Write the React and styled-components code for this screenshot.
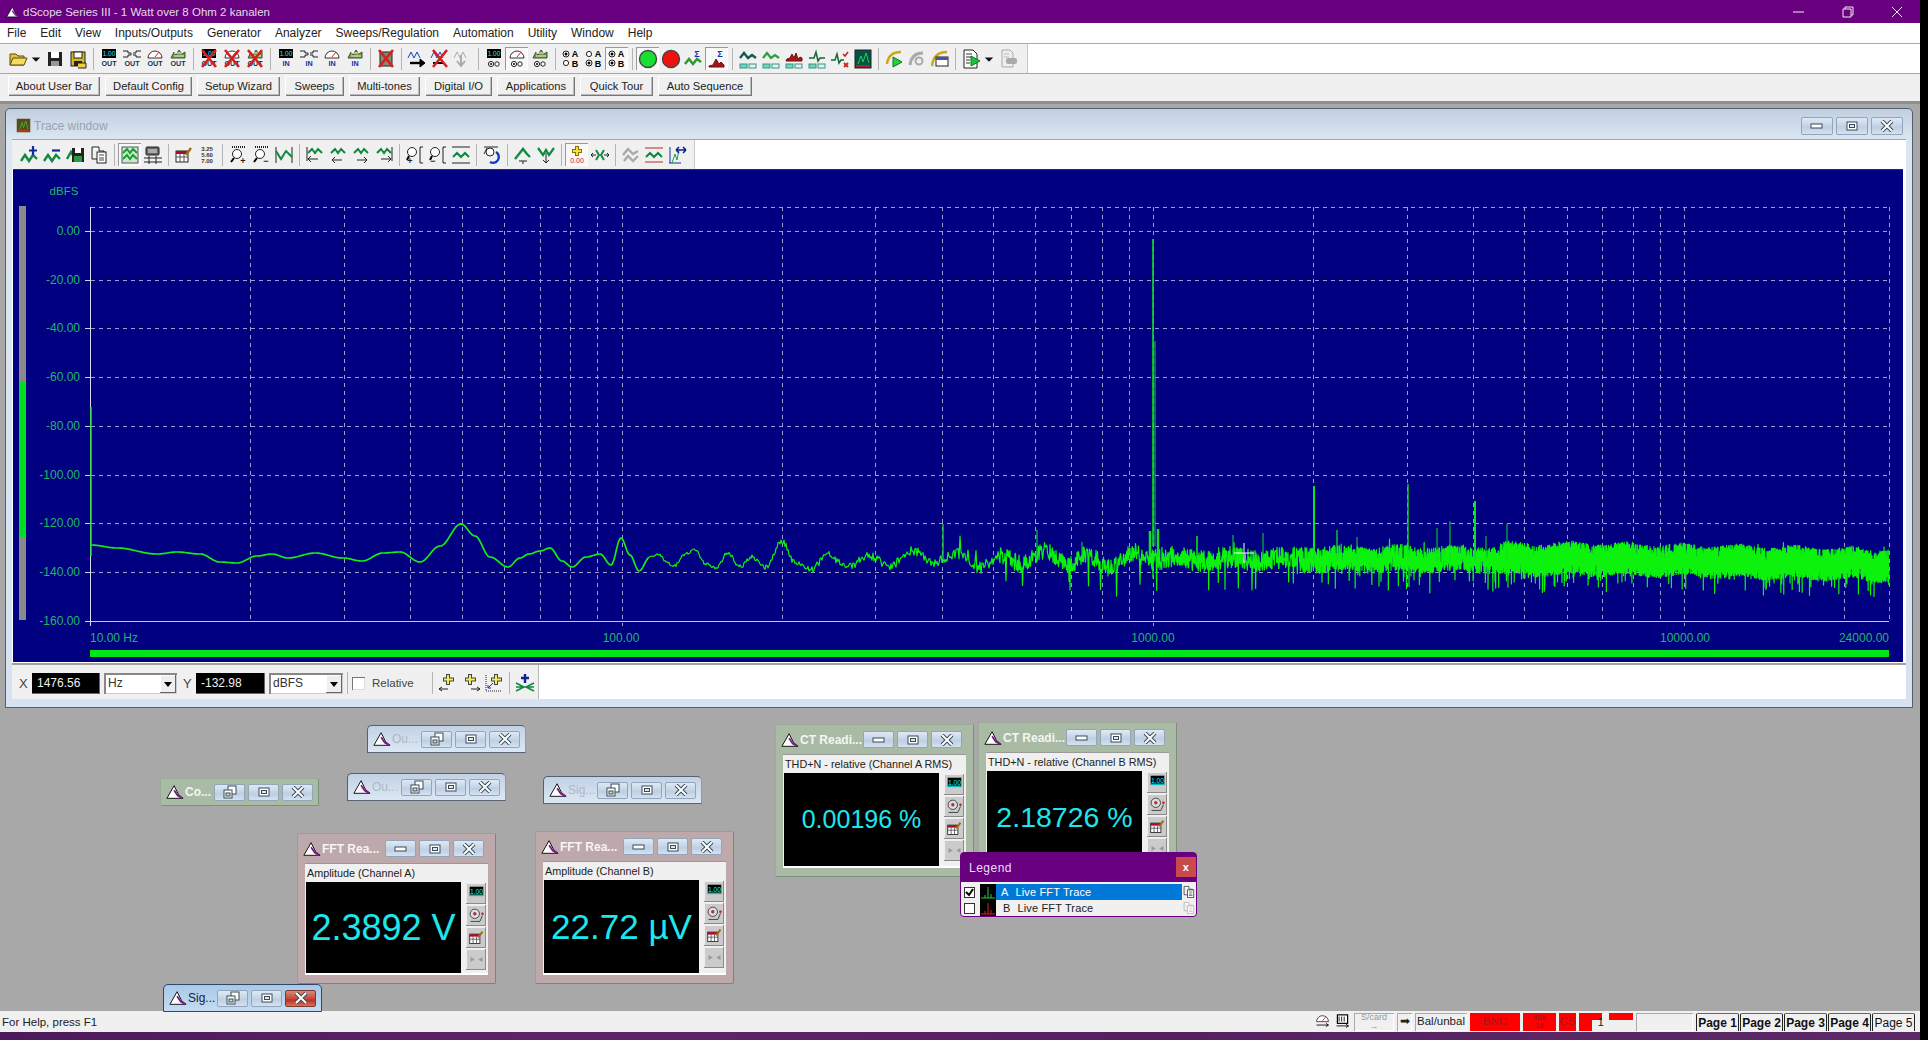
import React from 'react';
import styled, { createGlobalStyle, css } from 'styled-components';

const Global = createGlobalStyle`
  html, body { margin: 0; padding: 0; background: #000; overflow: hidden; }
  #root { width: 1928px; height: 1040px; }
  * { box-sizing: border-box; }
`;
const FONT = '"Liberation Sans", Arial, sans-serif';
const PURPLE = '#680080';

const Screen = styled.div`display:flex;width:1928px;height:1040px;background:#000;font-family:${FONT};font-size:12px;color:#111;`;
const Main = styled.div`display:flex;flex-direction:column;width:1920px;height:1040px;`;
const TitleBar = styled.div`display:flex;align-items:center;height:23px;background:${PURPLE};color:#e4dbe8;padding-left:6px;gap:3px;font-size:11.5px;`;
const TitleText = styled.span`flex:1;`;
const CaptionBtn = styled.div`width:46px;height:23px;display:flex;align-items:center;justify-content:center;`;
const MenuBar = styled.div`display:flex;align-items:center;gap:14px;background:#fff;padding-left:7px;border-bottom:1px solid #a9a9a9;height:21px;`;
const MenuItem = styled.span`font-size:12px;color:#222;`;
const ToolRow = styled.div`display:flex;height:30px;background:#fff;border-bottom:1px solid #a9a9a9;`;
const ToolStrip = styled.div`display:flex;align-items:center;background:#f0f0f0;height:100%;padding:0 ${p=>p.$end}px 0 ${p=>p.$start}px;border-right:1px solid #c8c8c8;`;
const ToolBtn = styled.div`
  width:${p=>p.$w||23}px;height:23px;display:flex;align-items:center;justify-content:center;flex:none;
  ${p=>p.$on&&css`background:#f8f8f8;box-shadow:inset 1px 1px 0 #999,inset -1px -1px 0 #fff;`}
`;
const ToolSep = styled.div`width:8px;height:22px;flex:none;display:flex;justify-content:center;&::after{content:"";width:1px;height:100%;background:#b4b4b4;}`;
const UserBar = styled.div`display:flex;align-items:center;height:27px;background:#f0f0f0;padding:0 0 3px 8px;gap:5px;`;
const UserBtn = styled.div`
  width:${p=>p.$w}px;height:20px;display:flex;align-items:center;justify-content:center;font-size:11.2px;color:#222;background:#f0f0f0;
  box-shadow:inset 1px 1px 0 #fff,inset -1px -1px 0 #777,inset -2px -2px 0 #bbb;
`;
const Mdi = styled.div`position:relative;flex:1;background:#a8a8a8;box-shadow:inset 0 3px 0 #8f8f8f;`;

const TraceWin = styled.div`
  position:absolute;left:5px;top:7px;width:1908px;height:600px;border:1px solid #55606c;border-radius:5px 5px 0 0;
  padding:0 6px 8px;background:linear-gradient(#c0cfe0 0,#dbe6f2 30px,#d6e2ef 100%);display:flex;flex-direction:column;
`;
const TraceHead = styled.div`display:flex;align-items:center;height:30px;padding:3px 3px 0 4px;gap:3px;`;
const TraceTitle = styled.span`flex:1;color:#97a3b0;font-size:12px;`;
const WinBtns = styled.div`display:flex;gap:${p=>p.$gap||3}px;`;
const WinBtn = styled.div`
  width:${p=>p.$w||31}px;height:${p=>p.$h||18}px;display:flex;align-items:center;justify-content:center;border-radius:2px;
  border:1px solid ${p=>p.$red?'#7a3a30':'#93a5ba'};
  background:${p=>p.$red?'linear-gradient(#d88a7a,#c84a38 50%,#b83020 60%,#d87060)':'linear-gradient(#dfe9f4,#c4d4e6 50%,#bccee2 55%,#d4e2f0)'};
`;
const TraceBody = styled.div`flex:1;display:flex;flex-direction:column;background:#fff;`;
const TraceTools = styled.div`display:flex;height:30px;background:#fff;border-top:1px solid #9aa;`;
const PlotWrap = styled.div`height:493px;margin:0 3px 0 1px;background:#000080;border-top:1px solid #333;`;
const PlotSvg = styled.svg`display:block;width:100%;height:100%;`;
const CursorBar = styled.div`display:flex;flex:1;background:#fff;border-top:2px solid #a0a0a0;margin-top:1px;`;
const CursorStrip = styled.div`display:flex;align-items:center;width:527px;background:#f0f0f0;border-right:1px solid #b8b8b8;padding:2px 0 0 7px;font-size:12px;color:#333;`;
const CursorLabel = styled.span`width:13px;margin-left:${p=>p.$ml||0}px;color:#444;font-size:13px;`;
const BlackBox = styled.div`width:${p=>p.$w}px;height:21px;background:#000;color:#f0f0f0;display:flex;align-items:center;padding-left:5px;font-size:12px;box-shadow:inset -1px -1px 0 #666;`;
const Select = styled.div`
  width:${p=>p.$w}px;height:21px;margin:0 ${p=>p.$mr||0}px 0 ${p=>p.$ml||4}px;background:#fff;display:flex;align-items:center;justify-content:space-between;padding-left:4px;
  box-shadow:inset 2px 2px 0 #888,inset -1px -1px 0 #ccc;
`;
const SelectBtn = styled.div`width:16px;height:18px;margin:2px 1px 0 0;background:#eee;box-shadow:inset -1px -1px 0 #666,inset 1px 1px 0 #fff;display:flex;align-items:center;justify-content:center;
  &::after{content:"";border:4px solid transparent;border-top:5px solid #000;border-bottom:0;}`;
const Check = styled.div`width:13px;height:13px;background:#fff;box-shadow:inset 1px 1px 0 #777,inset -1px -1px 0 #ddd;margin:0 7px 0 ${p=>p.$ml||0}px;`;
const RelText = styled.span`width:56px;color:#444;font-size:11.5px;`;

const tones = {
  blue: css`background:linear-gradient(#c2d2e5,#dbe7f3);border:1px solid #56616e;border-bottom-color:#59636e;border-radius:5px 5px 0 0;border-right-color:#8e9aa6;`,
  active: css`background:linear-gradient(#a9c8e8,#c4dcf2);border:1px solid #2c4a66;border-radius:5px 5px 0 0;`,
  green: css`background:#a9bba5;border:1px solid #9bab98;border-bottom-color:#7e8e7c;border-right-color:#7e8e7c;border-radius:2px;`,
  pink: css`background:#bda8ab;border:1px solid #aa9598;border-bottom-color:#8d7a7c;border-right-color:#8d7a7c;border-radius:2px;`,
};
const SubWin = styled.div`
  position:absolute;left:${p=>p.$x}px;top:${p=>p.$y-100}px;width:${p=>p.$w}px;height:${p=>p.$h}px;display:flex;flex-direction:column;
  ${p=>tones[p.$tone]}
`;
const SubHead = styled.div`display:flex;align-items:center;height:${p=>p.$h||26}px;padding:${p=>p.$top||0}px ${p=>p.$right||5}px 0 5px;flex:none;`;
const SubTitle = styled.span`
  flex:1;font-size:12px;margin-left:1px;white-space:nowrap;
  color:${p=>({blue:'#aeb8c6',active:'#1c2530',green:'#f4f6f2',pink:'#f8f4f4'}[p.$tone])};
  font-weight:${p=>(p.$tone==='green'||p.$tone==='pink')?700:400};
`;
const ReadLabel = styled.div`height:18px;margin:2px 7px 0;padding-left:2px;background:#f0f0f0;font-size:10.8px;display:flex;align-items:center;color:#222;white-space:nowrap;border-top:1px solid #999;flex:none;`;
const ReadBody = styled.div`display:flex;height:${p=>p.$h}px;margin:0 7px;background:#f0f0f0;border-bottom:2px solid #fff;flex:none;`;
const Display = styled.div`width:155px;background:#000;margin:1px 0 0 1px;display:flex;align-items:center;justify-content:center;color:#1ee6ee;font-size:${p=>p.$size}px;white-space:nowrap;`;
const SideBtns = styled.div`display:flex;flex-direction:column;gap:1px;padding:2px 0 0 5px;`;
const SideBtn = styled.div`width:20px;height:21px;background:#cbcbcb;box-shadow:inset -1px -1px 0 #8a8a8a,inset 1px 1px 0 #eee;display:flex;align-items:center;justify-content:center;`;

const LegendBox = styled.div`position:absolute;left:960px;top:751px;width:237px;height:65px;background:${PURPLE};border:1px solid ${PURPLE};border-radius:4px;display:flex;flex-direction:column;overflow:hidden;`;
const LegendHead = styled.div`display:flex;align-items:center;justify-content:space-between;height:30px;padding:0 0 0 8px;color:#eadff0;font-size:12px;letter-spacing:.5px;`;
const LegendClose = styled.div`width:20px;height:20px;background:#c84a4a;color:#fff;font-size:11px;font-weight:700;display:flex;align-items:center;justify-content:center;margin-top:-1px;`;
const LegendList = styled.div`background:#f0f0f0;flex:1;padding-top:2px;`;
const LegendRow = styled.div`display:flex;align-items:center;height:16px;padding-left:3px;font-size:11px;letter-spacing:.15px;`;
const LegendCheck = styled.div`width:11px;height:11px;background:#fff;border:1px solid #333;margin-right:5px;display:flex;align-items:center;justify-content:center;flex:none;`;
const LegendThumb = styled.div`width:16px;height:16px;background:#000;flex:none;`;
const LegendName = styled.div`width:188px;height:16px;display:flex;align-items:center;padding-left:${p=>p.$sel?5:7}px;gap:7px;background:${p=>p.$sel?'#0078d7':'transparent'};color:${p=>p.$sel?'#fff':'#222'};`;

const StatusBar = styled.div`display:flex;align-items:center;height:21px;background:#f0f0f0;padding:1px 5px 0 2px;gap:3px;font-size:11.5px;color:#222;`;
const HelpText = styled.span`flex:1;`;
const StatusIcon = styled.div`width:17px;height:18px;display:flex;align-items:center;justify-content:center;`;
const Cell = styled.div`
  width:${p=>p.$w}px;height:18px;display:flex;align-items:center;justify-content:center;white-space:nowrap;flex:none;line-height:1;
  ${p=>p.$red?css`background:#f00;color:#a01818;`:css`box-shadow:inset 1px 1px 0 #aaa,inset -1px -1px 0 #fff;`}
`;
const ScardCell = styled(Cell)`flex-direction:column;font-size:9px;color:#999;`;
const TinyRed = styled(Cell)`flex-direction:column;font-size:8px;font-weight:700;`;
const StepCell = styled.div`
  width:27px;height:18px;flex:none;display:flex;align-items:center;justify-content:flex-end;padding-right:2px;
  background:linear-gradient(#f00,#f00) 0 0/23px 7px no-repeat,linear-gradient(#f00,#f00) 0 0/13px 100% no-repeat;
`;
const TopRed = styled.div`width:24px;height:18px;flex:none;background:linear-gradient(#f00,#f00) 0 0/100% 7px no-repeat;`;
const Pages = styled.div`display:flex;gap:1px;`;
const PageTab = styled.div`width:43px;height:18px;border:1px solid #222;border-top-color:#666;border-bottom:none;border-radius:2px 2px 0 0;display:flex;align-items:center;justify-content:center;font-size:12px;font-weight:${p=>p.$b?700:400};color:#111;`;
const BottomStrip = styled.div`height:8px;background:linear-gradient(90deg,#4c1a5a,#5f2468 30%,#56205f 60%,#5c2a68);`;
const BlackEdge = styled.div`width:8px;height:100%;background:#000;`;

/* ---------- icon drawings ---------- */
const T = ({x,y,s=6,c='#000',b,a='middle',children}) => <text x={x} y={y} fontSize={s} fill={c} fontWeight={b?700:400} textAnchor={a} fontFamily={FONT}>{children}</text>;
const P = ({d,c='#000',w=1,f='none',dash}) => <path d={d} stroke={c} strokeWidth={w} fill={f} strokeDasharray={dash} />;
const XX = () => <P d="M3 1L17 18M17 1L3 18" c="#d42020" w={2.6} />;
const Num = () => <><rect x="3" y="0" width="14" height="9" /><T x={10} y={7} s={6.5} c="#1ee">1.00</T></>;
const Gen = () => <P d="M1 2h5v2h3v2H6v2H1M19 2h-5v2h-3M11 6h3v2h5" c="#222" />;
const Gauge = () => <><P d="M3 9a7 7 0 0 1 14 0z" c="#333" f="#fff" /><P d="M10 8l4-5" c="#d22" /></>;
const Multi = () => <><P d="M3 9l3-6 2 3 3-5 3 4 3-2v6z" c="#354" f="#7d9a30" /><P d="M6 4h8M6 7h10" c="#eee" /></>;
const Out = () => <T x={10} y={17} s={7.2} c="#163050" b>OUT</T>;
const In = () => <T x={10} y={17} s={7.2} c="#1030a0" b>IN</T>;
const Ring = ({x,y}) => <><circle cx={x} cy={y} r="3" fill="#fff" stroke="#222" /><circle cx={x} cy={y} r="1.5" /></>;
const Rc = ({x,y}) => <circle cx={x} cy={y} r="2.6" fill="#fff" stroke="#222" />;
const AB = ({a,b}) => <>{a?<Ring x={5} y={5}/>:<Rc x={5} y={5}/>}{b?<Ring x={5} y={14}/>:<Rc x={5} y={14}/>}<T x={14} y={8} s={9} b>A</T><T x={14} y={18} s={9} b>B</T></>;
const Small2 = () => <><Rc x={7} y={15} /><circle cx="13" cy="15" r="2.2" fill="#fff" stroke="#222"/><circle cx="7" cy="15" r="1" /></>;
const Boxes = ({c='#2a9a8a'}) => <><rect x="2" y="15" width="7" height="4" fill="#7ccfc0" stroke={c}/><rect x="11" y="15" width="7" height="4" fill="#eee" stroke={c}/></>;
const Sigma = ({c='#1030c0'}) => <T x={13} y={8} s={9} c={c} b>Σ</T>;
const Cal = () => <><rect x="2" y="6" width="12" height="11" fill="#fff" stroke="#222"/><rect x="2" y="6" width="12" height="3" fill="#a01030"/><P d="M2 12h12M6 9v8M10 9v8" c="#555"/><P d="M12 10l5-7" c="#a07010" w={2.4}/></>;
const RulerZ = ({m}) => <><P d="M4 2h14" c="#222" w={2} dash="1 1"/><circle cx="9" cy="9" r="4.5" fill="#fff" stroke="#222"/><P d="M6 13l-3 4" w={2}/><T x={15} y={19} s={9} c="#222" b>{m}</T></>;
const ZoomY = ({m}) => <><circle cx="7" cy="7" r="4.5" fill="#fff" stroke="#222"/><P d="M4 11l-2 4" w={2}/><T x={5} y={19} s={9} c="#222" b>{m}</T><P d="M18 2h-3v16h3" c="#222"/></>;

const I = {
  open:<><P d="M2 5h6l2 2h6v9H2z" c="#5a4a10" f="#e8c030"/><P d="M2 16l3-7h14l-3 7z" c="#5a4a10" f="#f4dc60"/></>,
  save:<><rect x="3" y="3" width="14" height="14" fill="#222"/><rect x="6" y="3" width="8" height="6" fill="#fff"/><rect x="6" y="12" width="8" height="5" fill="#999"/></>,
  saveAll:<><rect x="3" y="3" width="14" height="14" fill="#d8b820" stroke="#222"/><rect x="6" y="3" width="8" height="6" fill="#fff" stroke="#222"/><rect x="6" y="12" width="8" height="5" fill="#222"/><P d="M10 14h8v5h-8" c="#222" f="#e8d040"/></>,
  numOut:<><Num/><Out/></>, genOut:<><Gen/><Out/></>, gaugeOut:<><Gauge/><Out/></>, multiOut:<><Multi/><Out/></>,
  numOutX:<><Num/><Out/><XX/></>, gaugeOutX:<><Gauge/><Out/><XX/></>, multiOutX:<><Multi/><Out/><XX/></>,
  numIn:<><Num/><In/></>, genIn:<><Gen/><In/></>, gaugeIn:<><Gauge/><In/></>, multiIn:<><Multi/><In/></>,
  bigX:<><rect x="4" y="3" width="12" height="14" fill="#8a8a70" stroke="#222"/><XX/></>,
  sweep:<><P d="M1 9l3-6 3 6 3-6 3 6" c="#1040c0"/><P d="M3 14h11" w={2.4}/><P d="M13 10l5 4-5 4z" f="#000"/></>,
  sweepX:<><P d="M1 9l3-6 3 6 3-6 3 6" c="#1040c0"/><P d="M3 14h11" w={2}/><XX/></>,
  sweepG:<><P d="M1 9l3-6 3 6 3-6 3 6" c="#aab"/><P d="M8 6v10M4 12l4 5 4-5" c="#aaa" w={2}/></>,
  numAB:<><Num/><Small2/></>, gaugeAB:<><Gauge/><Small2/></>, multiAB:<><Multi/><Small2/></>,
  ab1:<AB a/>, ab2:<AB b/>, ab3:<AB a b/>,
  green:<circle cx="10" cy="10" r="8.5" fill="#18e030" stroke="#444" strokeWidth="1.4"/>,
  red:<circle cx="10" cy="10" r="8.5" fill="#f01010" stroke="#444" strokeWidth="1.4"/>,
  sigW:<><Sigma/><P d="M1 15l4-5 4 5 4-5 4 3" c="#2a9a2a" w={2.4}/></>,
  sigS:<><Sigma/><P d="M2 18h15v-2l-3-3-2 2-3-5-3 6-4 1z" c="#701010" f="#a01818"/></>,
  r1:<><P d="M2 9l4-5 4 5 4-3 4 3" c="#145a50" w={2.4}/><Boxes/></>,
  r2:<><P d="M2 9l4-5 4 5 4-3 4 3" c="#2aa040" w={2.2}/><Boxes/></>,
  r3:<><P d="M2 12h16v-3l-2-1-2 2-2-6-2 5-2-4-2 4-3 1z" c="#701010" f="#a01818"/><Boxes/></>,
  r4:<><P d="M2 9h5l2-6 2 9 2-3h5" c="#106a30" w={1.5}/><Boxes/></>,
  r5:<><P d="M1 11h4l2-6 2 9 2-3h3" c="#106a30" w={1.5}/><P d="M13 5l2 2 3-4" c="#c02020" w={1.5}/><P d="M14 14l4 4M18 14l-4 4" c="#d02020" w={1.8}/></>,
  r6:<><rect x="2" y="1" width="16" height="18" fill="#04504a" stroke="#222"/><P d="M3 17h14" c="#d02020" w={1.5}/><P d="M5 15l3-8 2 6 3-9 3 10" c="#2ad040"/></>,
  a1:<><P d="M3 15C4 7 9 3 17 3" c="#c8a818" w={2.4}/><P d="M9 8l9 5-9 5z" c="#0a7a20" f="#20d040"/></>,
  a2:<><P d="M3 16C4 8 9 4 16 4" c="#aaa" w={3}/><circle cx="12" cy="12" r="3.5" fill="none" stroke="#aaa" strokeWidth="2"/></>,
  a3:<><P d="M2 17C3 8 8 3 17 3" c="#c8a818" w={2.4}/><rect x="6" y="8" width="12" height="9" fill="#fff" stroke="#222"/><rect x="6" y="8" width="12" height="3" fill="#5050a0"/></>,
  doc:<><P d="M3 1h9l4 4v14H3z" f="#fff" c="#222"/><P d="M5 5h6M5 8h6M5 11h4M5 14h4" c="#333"/><P d="M10 7l9 5-9 5z" c="#0a7a20" f="#20c040"/></>,
  printG:<><P d="M4 1h8l3 3v14H4z" f="#eee" c="#aaa"/><rect x="8" y="9" width="11" height="6" rx="2" fill="#aaa"/><P d="M6 5h5M6 8h5" c="#bbb"/></>,
  wPlus:<><P d="M1 16l4-6 4 6 4-6 4 4" c="#108a40" w={2.4}/><P d="M13 1v9M9 5.5h8" c="#102aa0" w={2.2}/></>,
  wMinus:<><P d="M1 16l4-6 4 6 4-6 4 4" c="#108a40" w={2.4}/><P d="M9 5.5h8" c="#102aa0" w={2.2}/></>,
  wSave:<><P d="M1 14l4-7 4 7" c="#108a40" w={2.4}/><rect x="6" y="3" width="12" height="14" fill="#222"/><rect x="9" y="3" width="6" height="5" fill="#fff"/><rect x="8" y="11" width="8" height="6" fill="#2a9a40"/></>,
  copy:<><P d="M3 2h7v4h5v4" c="#222" f="#fff"/><P d="M3 2v12h5" c="#222"/><rect x="8" y="7" width="9" height="11" fill="#fff" stroke="#222"/><P d="M10 10h5M10 13h5M10 15h5" c="#444"/></>,
  copyG:<><P d="M3 2h7v4h5v4" c="#aaa" f="#fff"/><P d="M3 2v12h5" c="#aaa"/><rect x="8" y="7" width="9" height="11" fill="#fff" stroke="#aaa"/><P d="M10 10h5M10 13h5M10 15h5" c="#bbb"/></>,
  view:<><rect x="2" y="2" width="16" height="16" fill="#cde8cc" stroke="#555"/><P d="M3 8l4-4 3 4 3-4 4 4M3 14l4-4 3 4 3-4 4 4" c="#18a030" w={2}/></>,
  table:<><rect x="3" y="2" width="13" height="8" rx="1" fill="#666" stroke="#222"/><P d="M5 5h9M5 7h9" c="#eee"/><P d="M1 13h18M1 17h18M6 11v8M13 11v8" c="#222"/></>,
  note:<Cal/>,
  nums:<><T x={10} y={6} s={6} c="#333" b>3.25</T><T x={10} y={12} s={6} c="#333" b>5.60</T><T x={10} y={18} s={6} c="#333" b>7.00</T></>,
  rp:<RulerZ m="+"/>, rm:<RulerZ m="−"/>,
  span:<><P d="M2 2v16M18 2v16" c="#222"/><P d="M2 6l5 8 5-8 6 6" c="#108a40" w={2}/></>,
  p1:<><P d="M3 8l4-4 3 4 3-4 4 4" c="#108a40" w={2}/><P d="M2 2v14M3 14h10M3 14l3-3M3 14l3 3" c="#222"/></>,
  p2:<><P d="M3 8l4-4 3 4 3-4 4 4" c="#108a40" w={2}/><P d="M4 15h10M4 15l3-3M4 15l3 3" c="#222"/></>,
  p3:<><P d="M3 8l4-4 3 4 3-4 4 4" c="#108a40" w={2}/><P d="M6 15h10M16 15l-3-3M16 15l-3 3" c="#222"/></>,
  p4:<><P d="M3 8l4-4 3 4 3-4 4 4" c="#108a40" w={2}/><P d="M18 2v14M7 14h10M17 14l-3-3M17 14l-3 3" c="#222"/></>,
  zp:<ZoomY m="+"/>, zm:<ZoomY m="−"/>,
  wr:<><P d="M1 2h18" c="#222"/><P d="M1 18h18" c="#222"/><P d="M2 12l4-4 4 4 4-4 4 4" c="#108a40" w={2}/></>,
  undo:<><P d="M2 2h14" c="#222"/><circle cx="8" cy="7" r="4" fill="#fff" stroke="#222"/><P d="M14 7a5 5 0 0 1-6 10" c="#1040c0" w={2.4}/><P d="M5 3l-3 6" c="#222"/></>,
  pu:<><P d="M2 14l4-5 4-5 4 5 3 3" c="#108a40" w={2.4}/><P d="M6 16h8M10 16v3" c="#222"/></>,
  pd:<><P d="M2 3l5 7 3-5 3 5 5-7" c="#108a40" w={2.2}/><P d="M10 8v10M7 15l3 3 3-3" c="#222"/></>,
  cur:<><P d="M10 1v10M5 6h10" c="#8a7000" w={4}/><P d="M10 2v8M6 6h8" c="#f4e040" w={2}/><T x={10} y={18} s={7} c="#c02020">0.00</T></>,
  curA:<><P d="M1 10h5M14 10h5M3 8l-2 2 2 2M17 8l2 2-2 2" c="#222"/><P d="M6 5l3 5-3 5M14 5l-3 5 3 5" c="#108a40" w={2}/></>,
  gr:<><P d="M2 10l5-6 5 5 5-3M3 16l4-5 5 5 5-5" c="#aaa" w={2.4}/></>,
  lines:<><P d="M1 3h18M1 17h18" c="#c82020"/><P d="M2 12l4-4 4 4 4-4 4 4" c="#108a40" w={2}/></>,
  scale:<><P d="M3 2v16M2 18h12" c="#1030a0"/><P d="M5 18l3-9 2 6 2-10" c="#20a040"/><P d="M9 5h10M9 5l3-3M9 5l3 3M19 5l-3-3M19 5l-3 3" c="#102090" w={1.5}/></>,
  cLeft:<><P d="M10 1v11M5 6.5h11" c="#444" w={4}/><P d="M10 2v9M6 6.5h9" c="#f4ec60" w={2}/><P d="M1 16h9M1 16l3-2M1 16l3 2" c="#222"/></>,
  cRight:<><P d="M9 1v11M4 6.5h11" c="#444" w={4}/><P d="M9 2v9M5 6.5h9" c="#f4ec60" w={2}/><P d="M10 16h9M19 16l-3-2M19 16l-3 2" c="#222"/></>,
  cZero:<><P d="M12 1v11M7 6.5h11" c="#444" w={4}/><P d="M12 2v9M8 6.5h9" c="#f4ec60" w={2}/><P d="M2 2v16h16" c="#222" dash="1 1"/><P d="M9 10l-5 5M4 12v3h3" c="#1030c0"/></>,
  cArr:<><P d="M10 1v9M6 5h8" c="#102090" w={2.4}/><P d="M1 14h18M1 10l8 4-8 4M19 10l-8 4 8 4" c="#108a40" w={1.6}/></>,
  drop:<path d="M4 8h12l-6 6z" fill="#111"/>,
  m1:<><rect x="2" y="2" width="16" height="11" fill="#000"/><T x={10} y={10} s={8} c="#1ee">1.00</T><P d="M2 12h16" c="#1ee" w={1.4}/></>,
  target:<><circle cx="8" cy="8" r="5.5" fill="#ddd" stroke="#333"/><circle cx="8" cy="8" r="2" fill="#b03040"/><P d="M3 17h11l3-7" c="#333"/><circle cx="17" cy="8" r="1.5" fill="#c02020"/></>,
  arrows:<path d="M8 10l-5-3v6zM12 10l5-3v6z" fill="#999"/>,
  gauge2:<><Gauge/><P d="M3 13h14M14 11l3 2-3 2" c="#000"/></>,
  strip:<><rect x="4" y="1" width="12" height="10" fill="#fff" stroke="#000" strokeWidth="1.4"/><P d="M6 3v6M9 3v6M12 3v6" c="#000"/><P d="M3 14h14M14 12l3 2-3 2" c="#000"/></>,
  logo:<><path d="M1 17L9 3l5 10 5 4z" fill="#fff" stroke="#000"/><P d="M9 8l4 6 5 3" c="#7a1a8a" w={2}/></>,
  chart:<><rect x="1" y="1" width="18" height="18" fill="#5a4a18"/><P d="M3 17h14" c="#d04020" w={1.5}/><P d="M5 15l3-9 2 7 3-9 3 11" c="#40c040"/></>,
};
const Icon = ({n,s=20}) => <svg width={s} height={s} viewBox="0 0 20 20">{I[n]}</svg>;

const GMin = () => <svg width="14" height="8" viewBox="0 0 14 8"><rect x="1" y="2" width="11" height="4" fill="#fff" stroke="#3a4a58"/></svg>;
const GMax = () => <svg width="12" height="12" viewBox="0 0 12 12"><rect x="1" y="2" width="10" height="8" fill="#fff" stroke="#3a4a58"/><rect x="3.5" y="4.5" width="5" height="3" fill="#dfe8f0" stroke="#3a4a58"/></svg>;
const GRes = () => <svg width="14" height="14" viewBox="0 0 14 14"><rect x="5" y="1" width="8" height="8" fill="#fff" stroke="#3a4a58"/><rect x="1" y="5" width="8" height="8" fill="#fff" stroke="#3a4a58"/><rect x="3" y="8" width="4" height="3" fill="#cdd" stroke="#3a4a58"/></svg>;
const GClose = () => <svg width="14" height="12" viewBox="0 0 14 12"><path d="M2 1l10 10M12 1L2 11" stroke="#3a4a58" strokeWidth="4"/><path d="M2 1l10 10M12 1L2 11" stroke="#fff" strokeWidth="2"/></svg>;

/* ---------- toolbars ---------- */
const mainTools = [
  [['open'],['drop',14],['save'],['saveAll']],
  [['numOut'],['genOut'],['gaugeOut'],['multiOut']],
  [['numOutX'],['gaugeOutX'],['multiOutX']],
  [['numIn'],['genIn'],['gaugeIn'],['multiIn']],
  [['bigX']],
  [['sweep'],['sweepX'],['sweepG']],
  [['numAB'],['gaugeAB',23,1],['multiAB']],
  [['ab1'],['ab2'],['ab3',23,1]],
  [['green',23,1],['red'],['sigW'],['sigS',23,1]],
  [['r1'],['r2'],['r3'],['r4'],['r5'],['r6']],
  [['a1'],['a2'],['a3']],
  [['doc'],['drop',14],['printG']],
];
const traceTools = [
  [['wPlus'],['wMinus'],['wSave'],['copy']],
  [['view',23,1],['table']],
  [['note'],['nums']],
  [['rp'],['rm'],['span']],
  [['p1'],['p2'],['p3'],['p4']],
  [['zp'],['zm'],['wr']],
  [['undo']],
  [['pu'],['pd']],
  [['cur',23,1],['curA']],
  [['gr'],['lines'],['scale']],
];
const Tools = ({groups}) => groups.map((g,i) => (
  <React.Fragment key={i}>
    {i>0 && <ToolSep />}
    {g.map(([n,w,on]) => <ToolBtn key={n+i} $w={w} $on={on}><Icon n={n}/></ToolBtn>)}
  </React.Fragment>
));

/* ---------- chart ---------- */
let seed = 123456;
const rnd = () => { seed = (seed * 1664525 + 1013904223) >>> 0; return seed / 4294967296; };
const X0 = 90.5, DEC = 531.3, Y0 = 230, DB = 48.72;
const fx = (f) => X0 + Math.log10(f / 10) * DEC;
const low = [[91,544],[117,547],[157,553],[177,551],[200,553],[220,561],[237,562],[257,555],[272,553],[288,557],[315,552],[343,557],[362,560],[383,552],[400,551],[420,561],[440,545],[461,523],[475,535],[490,556],[508,566],[520,557],[529,553],[540,550],[550,547],[562,560],[572,566],[586,556],[600,553],[611,564],[621,537],[630,554],[639,570],[650,556],[658,553],[668,562],[674,565],[686,553],[695,549],[705,562],[716,566],[728,552],[740,566],[752,556],[766,566],[782,540],[795,562],[812,568],[825,556]];
const lowY = (x) => {
  for (let i=0;i<low.length-1;i++){ const a=low[i],b=low[i+1];
    if (x>=a[0]&&x<=b[0]){ const t=(x-a[0])/(b[0]-a[0]); const s=(1-Math.cos(t*Math.PI))/2; return a[1]+(b[1]-a[1])*s; } }
  const drift = x>1600 ? (x-1600)/290*6 : 0;
  const wob = x<1150 ? 6*Math.sin(x/7)+3*Math.sin(x/19) : 2*Math.sin(x/9);
  return 558 + wob + drift;
};
const buildTrace = (from,to) => {
  let d = '';
  for (let px=from; px<to; px++){
    const n = px<1000?1:px<1150?2:px<1300?3:px<1500?6:12;
    for (let k=0;k<n;k++){
      const x = px + k/n;
      const base = lowY(x);
      const amp = px<650?0:px<1000?1+(px-650)/350*5:px<1150?9:px<1300?11:px<1500?13:16;
      let y = base + (rnd()-.5)*2*amp;
      const r = rnd();
      if (px>1000 && r<.025) y = base + 14 + rnd()*18;
      else if (px>850 && r<.03) y = base - 8 - rnd()*12;
      d += `${d?'L':'M'}${x.toFixed(2)} ${y.toFixed(1)}`;
    }
  }
  return d;
};
const TRACE_LOW = buildTrace(91,650);
const TRACE_HIGH = buildTrace(649,1889);
const spikes = [[1153,238,545,1.6],[1155,340,545,1],[1150,530,556,2.5],[1158,528,556,2.5],[1314,485,560,2],[1408,483,560,1.3],[1475,500,560,2],[1197,535,560,1.6],[1233,534,560,1],[1263,532,560,1],[1337,529,560,1.3],[1357,536,560,1],[1437,527,560,1],[1450,520,560,1],[1486,535,560,1],[1507,523,560,1],[943,523,558,1.3],[1037,529,558,1.1],[1082,541,558,1],[91,406,555,1.5]];
const dbs = [0,-20,-40,-60,-80,-100,-120,-140,-160];
const freqs = [];
[10,100,1000].forEach(d => [2,3,4,5,6,7,8,9,10].forEach(m => freqs.push(d*m)));
freqs.push(20000);
const LABEL = '#23b56c';
const GRID = '#9c9cd0';
const snap = (v) => Math.round(v) + .5;
const Chart = () => (
  <PlotSvg viewBox="13 169 1890 492">
    <rect x="19" y="205" width="7" height="414" fill="#8a8a8a" />
    <rect x="19" y="381" width="7" height="155" fill="#00e020" />
    <T x={64} y={194} s={11.5} c={LABEL}>dBFS</T>
    <g shapeRendering="crispEdges">
      {dbs.map((d,i) => {
        const y = snap(Y0 + i*DB);
        return <g key={d}>
          <line x1="85" x2={X0} y1={y} y2={y} stroke="#d0d0e8" />
          <line x1={X0} x2="1889" y1={y} y2={y} stroke={i===8?'#c8c8e4':GRID} strokeDasharray={i===8?undefined:'4 4'} />
        </g>;
      })}
      <line x1={X0} x2="1889" y1="206.5" y2="206.5" stroke={GRID} strokeDasharray="4 4" />
      <line x1={X0} x2={X0} y1="206" y2="625" stroke="#d8d8f0" />
      <line x1="1889.5" x2="1889.5" y1="206" y2="619" stroke={GRID} strokeDasharray="4 4" />
      {freqs.map(f => {
        const x = snap(fx(f)), big = f===100||f===1000||f===10000;
        return <line key={f} x1={x} x2={x} y1="206" y2={big?625:619} stroke={GRID} strokeDasharray="4 4" />;
      })}
    </g>
    {dbs.map((d,i) => <T key={d} x={80} y={Y0 + i*DB + 4} s={12} c={LABEL} a="end">{d.toFixed(2)}</T>)}
    <T x={90} y={641} s={12} c={LABEL} a="start">10.00 Hz</T>
    <T x={621} y={641} s={12} c={LABEL}>100.00</T>
    <T x={1153} y={641} s={12} c={LABEL}>1000.00</T>
    <T x={1685} y={641} s={12} c={LABEL}>10000.00</T>
    <T x={1889} y={641} s={12} c={LABEL} a="end">24000.00</T>
    <rect x="90" y="649" width="1799" height="7" fill="#00e61a" />
    <path d={TRACE_LOW} fill="none" stroke="#12ee12" strokeWidth="1.7" strokeLinejoin="round" />
    <path d={TRACE_HIGH} fill="none" stroke="#0cf20c" strokeWidth="1.2" strokeLinejoin="round" />
    {spikes.map(([x,a,b,w]) => <line key={x+'-'+a} x1={x} x2={x} y1={a} y2={b} stroke="#10e020" strokeWidth={w} />)}
    <path d="M1234 552h20M1244 542v20" stroke="#fff" strokeWidth="1" />
  </PlotSvg>
);

/* ---------- windows ---------- */
const MiniWin = ({tone,title,x,y}) => (
  <SubWin $tone={tone} $x={x} $y={y} $w={159} $h={28}>
    <SubHead $h={26}>
      <Icon n="logo" s={18}/>
      <SubTitle $tone={tone}>{title}</SubTitle>
      <WinBtns><WinBtn $h={17}><GRes/></WinBtn><WinBtn $h={17}><GMax/></WinBtn><WinBtn $h={17} $red={tone==='active'}><GClose/></WinBtn></WinBtns>
    </SubHead>
  </SubWin>
);
const ReadWin = ({tone,title,label,value,size,x,y,h}) => (
  <SubWin $tone={tone} $x={x} $y={y} $w={199} $h={h}>
    <SubHead $h={27} $right={11} $top={2}>
      <Icon n="logo" s={18}/>
      <SubTitle $tone={tone}>{title}</SubTitle>
      <WinBtns><WinBtn $h={17}><GMin/></WinBtn><WinBtn $h={17}><GMax/></WinBtn><WinBtn $h={17}><GClose/></WinBtn></WinBtns>
    </SubHead>
    <ReadLabel>{label}</ReadLabel>
    <ReadBody $h={h-57}>
      <Display $size={size}>{value}</Display>
      <SideBtns>
        <SideBtn><Icon n="m1" s={17}/></SideBtn>
        <SideBtn><Icon n="target" s={17}/></SideBtn>
        <SideBtn><Icon n="note" s={17}/></SideBtn>
        <SideBtn><Icon n="arrows" s={17}/></SideBtn>
      </SideBtns>
    </ReadBody>
  </SubWin>
);

const users = [['About User Bar',92],['Default Config',87],['Setup Wizard',83],['Sweeps',59],['Multi-tones',71],['Digital I/O',67],['Applications',78],['Quick Tour',73],['Auto Sequence',94]];
const menus = ['File','Edit','View','Inputs/Outputs','Generator','Analyzer','Sweeps/Regulation','Automation','Utility','Window','Help'];

export default function App() {
  return (
    <Screen>
      <Global />
      <Main>
        <TitleBar>
          <Icon n="logo" s={14}/>
          <TitleText>dScope Series III - 1 Watt over 8 Ohm 2 kanalen</TitleText>
          <CaptionBtn><svg width="12" height="12"><path d="M0 6h11" stroke="#eee"/></svg></CaptionBtn>
          <CaptionBtn><svg width="12" height="12"><path d="M3 3V1h8v8H9M1 3h8v8H1z" stroke="#eee" fill="none"/></svg></CaptionBtn>
          <CaptionBtn><svg width="12" height="12"><path d="M1 1l10 10M11 1L1 11" stroke="#eee"/></svg></CaptionBtn>
        </TitleBar>
        <MenuBar>{menus.map(m => <MenuItem key={m}>{m}</MenuItem>)}</MenuBar>
        <ToolRow><ToolStrip $start={6} $end={8}><Tools groups={mainTools}/></ToolStrip></ToolRow>
        <UserBar>{users.map(([t,w]) => <UserBtn key={t} $w={w}>{t}</UserBtn>)}</UserBar>
        <Mdi>
          <TraceWin>
            <TraceHead>
              <Icon n="chart" s={15}/>
              <TraceTitle>Trace window</TraceTitle>
              <WinBtns><WinBtn $w={32}><GMin/></WinBtn><WinBtn $w={32}><GMax/></WinBtn><WinBtn $w={32}><GClose/></WinBtn></WinBtns>
            </TraceHead>
            <TraceBody>
              <TraceTools><ToolStrip $start={6} $end={6}><Tools groups={traceTools}/></ToolStrip></TraceTools>
              <PlotWrap><Chart/></PlotWrap>
              <CursorBar>
                <CursorStrip>
                  <CursorLabel>X</CursorLabel>
                  <BlackBox $w={68}>1476.56</BlackBox>
                  <Select $w={73}>Hz<SelectBtn/></Select>
                  <CursorLabel $ml={6}>Y</CursorLabel>
                  <BlackBox $w={69}>-132.98</BlackBox>
                  <Select $w={74}>dBFS<SelectBtn/></Select>
                  <ToolSep/>
                  <Check $ml={1}/>
                  <RelText>Relative</RelText>
                  <ToolSep/>
                  <ToolBtn><Icon n="cLeft"/></ToolBtn>
                  <ToolBtn><Icon n="cRight"/></ToolBtn>
                  <ToolBtn><Icon n="cZero"/></ToolBtn>
                  <ToolSep/>
                  <ToolBtn><Icon n="cArr"/></ToolBtn>
                </CursorStrip>
              </CursorBar>
            </TraceBody>
          </TraceWin>

          <MiniWin tone="blue" title="Ou..." x={367} y={724}/>
          <MiniWin tone="green" title="Co..." x={160} y={777}/>
          <MiniWin tone="blue" title="Ou..." x={347} y={772}/>
          <MiniWin tone="blue" title="Sig..." x={543} y={775}/>
          <ReadWin tone="pink" title="FFT Rea..." label="Amplitude (Channel A)" value="2.3892 V" size={36} x={297} y={832} h={151}/>
          <ReadWin tone="pink" title="FFT Rea..." label="Amplitude (Channel B)" value="22.72 µV" size={35} x={535} y={830} h={153}/>
          <MiniWin tone="active" title="Sig..." x={163} y={983}/>
          <ReadWin tone="green" title="CT Readi..." label="THD+N - relative (Channel A RMS)" value="0.00196 %" size={25} x={775} y={723} h={153}/>
          <ReadWin tone="green" title="CT Readi..." label="THD+N - relative (Channel B RMS)" value="2.18726 %" size={28.5} x={978} y={721} h={153}/>

          <LegendBox>
            <LegendHead>Legend<LegendClose>x</LegendClose></LegendHead>
            <LegendList>
              <LegendRow>
                <LegendCheck><svg width="9" height="9"><path d="M1 4l3 3 4-6" stroke="#000" strokeWidth="2" fill="none"/></svg></LegendCheck>
                <LegendThumb><svg width="16" height="16"><path d="M1 14h14M8 14V3M5 14v-3M11 14v-4" stroke="#20d040"/></svg></LegendThumb>
                <LegendName $sel><span>A</span><span>Live FFT Trace</span></LegendName>
                <Icon n="copy" s={14}/>
              </LegendRow>
              <LegendRow>
                <LegendCheck/>
                <LegendThumb><svg width="16" height="16"><path d="M1 14h14M8 14V3M5 14v-3M11 14v-4" stroke="#e02020"/></svg></LegendThumb>
                <LegendName><span>B</span><span>Live FFT Trace</span></LegendName>
                <Icon n="copyG" s={14}/>
              </LegendRow>
            </LegendList>
          </LegendBox>
        </Mdi>
        <StatusBar>
          <HelpText>For Help, press F1</HelpText>
          <StatusIcon><Icon n="gauge2" s={17}/></StatusIcon>
          <StatusIcon><Icon n="strip" s={17}/></StatusIcon>
          <ScardCell $w={40}>S/card<span>→</span></ScardCell>
          <Cell $w={15}>➡</Cell>
          <Cell $w={52}>Bal/unbal</Cell>
          <Cell $w={50} $red>BNC</Cell>
          <TinyRed $w={33} $red>48k<span>16</span></TinyRed>
          <Cell $w={17} $red>CS</Cell>
          <StepCell>1</StepCell>
          <TopRed/>
          <Cell $w={57}/>
          <Pages>
            <PageTab $b>Page 1</PageTab><PageTab $b>Page 2</PageTab><PageTab $b>Page 3</PageTab><PageTab $b>Page 4</PageTab><PageTab>Page 5</PageTab>
          </Pages>
        </StatusBar>
        <BottomStrip/>
      </Main>
      <BlackEdge/>
    </Screen>
  );
}
